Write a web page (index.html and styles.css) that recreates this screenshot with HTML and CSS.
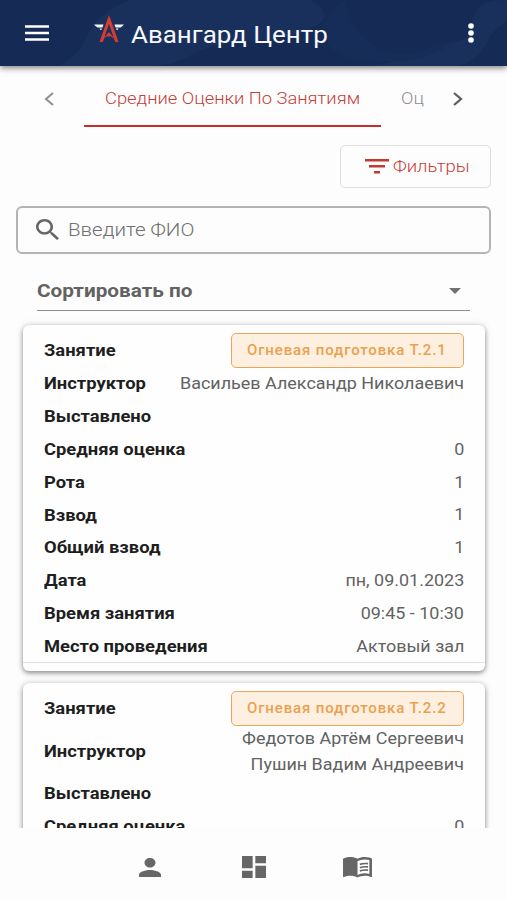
FILE: index.html
```html
<!DOCTYPE html>
<html lang="ru">
<head>
<meta charset="utf-8">
<title>Авангард Центр</title>
<link rel="stylesheet" href="styles.css">
</head>
<body>
<div class="app">
  <header class="topbar">
    <svg class="waves" viewBox="0 0 507 66" preserveAspectRatio="none"><path d="M60 66C100 42 75 22 130 0H310C350 20 300 40 245 42S190 66 150 66Z" fill="#19305c"/><path d="M360 66C410 65 425 45 455 42S455 0 507 0V22C485 30 490 56 460 66Z" fill="#19305c"/><path d="M345 0C350 25 365 48 395 53S430 40 450 42C435 62 385 66 350 58S320 15 345 0Z" fill="#172d59"/></svg>
    <svg class="burger" viewBox="0 0 24 16"><path d="M0 1.5H24M0 8H24M0 14.5H24" stroke="#fff" stroke-width="2.5"/></svg>
    <svg class="logo" viewBox="0 0 31 28"><path d="M0 9.5H9.5L8.5 12.5H3.5L1.5 11ZM5.5 13.5H8L7.3 15H6.5ZM30 9.5H20.5L21.5 12.5H26.5L28.5 11ZM24.5 13.5H22L22.7 15H23.5Z" fill="#f4f5fa"/><path d="M15 0L24.5 27H21.2L15 9L8.8 27H5.5Z" fill="#d63c31"/><path d="M9 24L14.6 17.4H15.4L21 24L15 20.2Z" fill="#b83e42"/><circle cx="15" cy="20" r="1.7" fill="#d63c31"/></svg>
    <h1 class="brand"><span class="wide">Авангард Центр</span></h1>
    <svg class="dots" viewBox="0 0 6 20"><g fill="#fff"><circle cx="3" cy="3" r="2.8"/><circle cx="3" cy="10" r="2.8"/><circle cx="3" cy="17" r="2.8"/></g></svg>
  </header>
  <nav class="tabs">
    <svg class="chev prev" viewBox="0 0 10 14"><path d="M9 1L2 7L9 13" fill="none" stroke="#919191" stroke-width="2.1"/></svg>
    <div class="tab active"><span class="wide">Средние Оценки По Занятиям</span></div>
    <div class="tab next-tab"><span class="wide">Оц</span></div>
    <svg class="chev next" viewBox="0 0 10 14"><path d="M1 1L8 7L1 13" fill="none" stroke="#5f5f5f" stroke-width="2.3"/></svg>
  </nav>
  <main class="content">
    <button class="filters"><svg viewBox="0 0 24 15"><path d="M0 1.3H24M4 7.3H20M9 13.3H15" stroke="#c13b35" stroke-width="2.4"/></svg><span class="wide">Фильтры</span></button>
    <div class="search"><svg viewBox="3 3 17.5 17.5" preserveAspectRatio="none"><path fill="#666" d="M15.5 14h-.79l-.28-.27C15.41 12.59 16 11.11 16 9.5 16 5.91 13.09 3 9.5 3S3 5.91 3 9.5 5.91 16 9.5 16c1.61 0 3.09-.59 4.23-1.57l.27.28v.79l5 4.99L20.49 19l-4.99-5zm-6 0C7.01 14 5 11.99 5 9.5S7.01 5 9.5 5 14 7.01 14 9.5 11.99 14 9.5 14z"/></svg><span class="wide">Введите ФИО</span></div>
    <div class="sort"><span class="wide">Сортировать по</span><i class="caret"></i></div>
    <section class="card">
      <div class="row first"><b class="wide">Занятие</b><div class="chip"><span class="wide">Огневая подготовка Т.2.1</span></div></div>
      <div class="row"><b class="wide">Инструктор</b><span class="wide val">Васильев Александр Николаевич</span></div>
      <div class="row"><b class="wide">Выставлено</b></div>
      <div class="row"><b class="wide">Средняя оценка</b><span class="wide val">0</span></div>
      <div class="row"><b class="wide">Рота</b><span class="wide val">1</span></div>
      <div class="row"><b class="wide">Взвод</b><span class="wide val">1</span></div>
      <div class="row"><b class="wide">Общий взвод</b><span class="wide val">1</span></div>
      <div class="row"><b class="wide">Дата</b><span class="wide val">пн, 09.01.2023</span></div>
      <div class="row"><b class="wide">Время занятия</b><span class="wide val">09:45 - 10:30</span></div>
      <div class="row"><b class="wide">Место проведения</b><span class="wide val">Актовый зал</span></div>
      <div class="rule"></div>
    </section>
    <section class="card">
      <div class="row first"><b class="wide">Занятие</b><div class="chip"><span class="wide">Огневая подготовка Т.2.2</span></div></div>
      <div class="row double"><b class="wide">Инструктор</b><span class="wide val">Федотов Артём Сергеевич<br>Пушин Вадим Андреевич</span></div>
      <div class="row"><b class="wide">Выставлено</b></div>
      <div class="row"><b class="wide">Средняя оценка</b><span class="wide val">0</span></div>
    </section>
  </main>
  <footer class="bottom">
    <svg class="person" viewBox="4 4 16 16" preserveAspectRatio="none"><path d="M12 12c2.21 0 4-1.79 4-4s-1.79-4-4-4-4 1.79-4 4 1.79 4 4 4zm0 2c-2.67 0-8 1.34-8 4v2h16v-2c0-2.66-5.33-4-8-4z"/></svg>
    <svg class="board" viewBox="3 3 18 18" preserveAspectRatio="none"><path d="M3 13h8V3H3v10zm0 8h8v-6H3v6zm10 0h8V11h-8v10zm0-18v6h8V3h-8z"/></svg>
    <svg class="book" viewBox="1 4.5 22 16.5" preserveAspectRatio="none"><path d="M21 5c-1.11-.35-2.33-.5-3.5-.5-1.95 0-4.05.4-5.5 1.5-1.45-1.1-3.55-1.5-5.5-1.5S2.45 4.9 1 6v14.65c0 .25.25.5.5.5.1 0 .15-.05.25-.05C3.1 20.45 5.05 20 6.5 20c1.95 0 4.05.4 5.5 1.5 1.35-.85 3.8-1.5 5.5-1.5 1.65 0 3.35.3 4.75 1.05.1.05.15.05.25.05.25 0 .5-.25.5-.5V6c-.6-.45-1.25-.75-2-1zm0 13.5c-1.1-.35-2.3-.5-3.5-.5-1.7 0-4.15.65-5.5 1.5V8c1.35-.85 3.8-1.5 5.5-1.5 1.2 0 2.4.15 3.5.5v11.5z"/><path d="M13.8 10.6Q16.5 9.5 20 10M13.8 13.3Q16.5 12.2 20 12.7M13.8 16Q16.5 14.9 20 15.4" fill="none" stroke="#666" stroke-width="1.4"/></svg>
  </footer>
</div>
</body>
</html>
```
FILE: styles.css
```css
* { box-sizing: border-box; }
body { margin: 0; background: #fdfdfd; font-family: Roboto, "Liberation Sans", sans-serif; color: #626262; }
.app { height: 900px; display: flex; flex-direction: column; overflow: hidden; }
.wide { display: inline-block; transform: scaleX(1.08); transform-origin: left center; white-space: nowrap; flex: none; }

.topbar { position: relative; z-index: 1; flex: none; height: 66px; display: flex; align-items: center; padding: 0 33px 0 25px; background: #152b56; box-shadow: 0 2px 6px rgba(0, 0, 0, .5); }
.topbar > * { position: relative; }
.topbar .waves { position: absolute; inset: 0; width: 100%; height: 100%; }
.burger { width: 24px; height: 16px; }
.logo { width: 31px; height: 28px; margin: -9px 0 0 45px; }
.brand { margin: 3px 0 0 6px; font-size: 24px; line-height: 32px; font-weight: 400; color: #f8f9fd; }
.brand .wide { transform: scaleX(1.08); }
.dots { width: 6px; height: 20px; margin-left: auto; }

.tabs { flex: none; height: 61px; display: flex; padding: 0 44px; color: #8e8e8e; }
.chev { flex: none; width: 10px; height: 14px; margin-top: 26px; }
.tab { font-size: 17px; line-height: 24px; padding-top: 20px; font-weight: 300; }
.tab.active { width: 297px; margin-left: 30px; padding-left: 21px; color: #c53d38; border-bottom: 2px solid #c3302c; }
.next-tab { margin-left: 20px; width: 24px; }
.next { margin-left: 28px; }

.content { flex: 1; min-height: 0; overflow: hidden; display: flex; flex-direction: column; padding: 18px 16px 0; }
.content > * { flex: none; }
.filters { align-self: flex-end; width: 151px; height: 43px; display: flex; align-items: center; padding: 0 0 0 24px; background: transparent; border: 1px solid #dedede; border-radius: 5px; font: 300 17px/24px Roboto, sans-serif; color: #c83e39; }
.filters svg { width: 24px; height: 15px; margin-right: 4px; }
.filters .wide { transform: scaleX(1.085); margin-top: -1px; }
.search { display: flex; align-items: center; height: 48px; margin-top: 18px; padding-left: 18px; border: 2px solid #b4b4b4; border-radius: 6px; font-size: 19px; font-weight: 300; color: #707070; }
.search svg { width: 23px; height: 21px; margin: -1px 9px 0 0; }
.search .wide { margin-top: -2px; }
.sort { display: flex; justify-content: space-between; align-items: center; height: 41px; margin: 16px 21px 0; padding-right: 9px; border-bottom: 1px solid #8f8f8f; font-size: 18.5px; font-weight: 700; color: #626262; }
.sort .wide { transform: scaleX(1.12); margin-top: 1px; }
.caret { border: 6.5px solid transparent; border-top: 6px solid #707070; border-bottom: 0; margin-top: 1px; }

.card { margin: 14px 6px 0 7px; padding: 8px 21px; height: 346px; background: #fefefe; border-radius: 6px; box-shadow: 0 2px 5px rgba(0, 0, 0, .42), 0 0 9px rgba(0, 0, 0, .1); font-size: 16.5px; }
.card + .card { margin-top: 12px; }
.row { display: flex; align-items: center; justify-content: space-between; height: 32.8px; padding-top: 1px; }
.row b { color: #1e1e1e; font-weight: 700; transform: scaleX(1.114); }
.row .val { transform: scaleX(1.088); transform-origin: right center; text-align: right; line-height: 25.5px; }
.row.first { height: 34px; padding-top: 0; }
.row.double { height: 52px; }
.chip { width: 233px; height: 35px; display: flex; align-items: center; padding-left: 15px; border: 1.5px solid #eba65c; border-radius: 5px; background: #fdf0e1; color: #eba04f; font-size: 14px; font-weight: 500; letter-spacing: .8px; }
.chip .wide { transform: scaleX(1.072); }
.rule { height: 1px; margin: 0 -21px; background: #e2e2e2; }

.bottom { position: relative; flex: none; height: 72px; display: flex; align-items: center; padding: 6px 0 0 139px; background: #fdfdfd; fill: #666; }
.person { width: 22px; height: 19px; }
.board { width: 24px; height: 22px; margin-left: 81px; }
.book { width: 29px; height: 20px; margin-left: 77px; overflow: visible; }
```
